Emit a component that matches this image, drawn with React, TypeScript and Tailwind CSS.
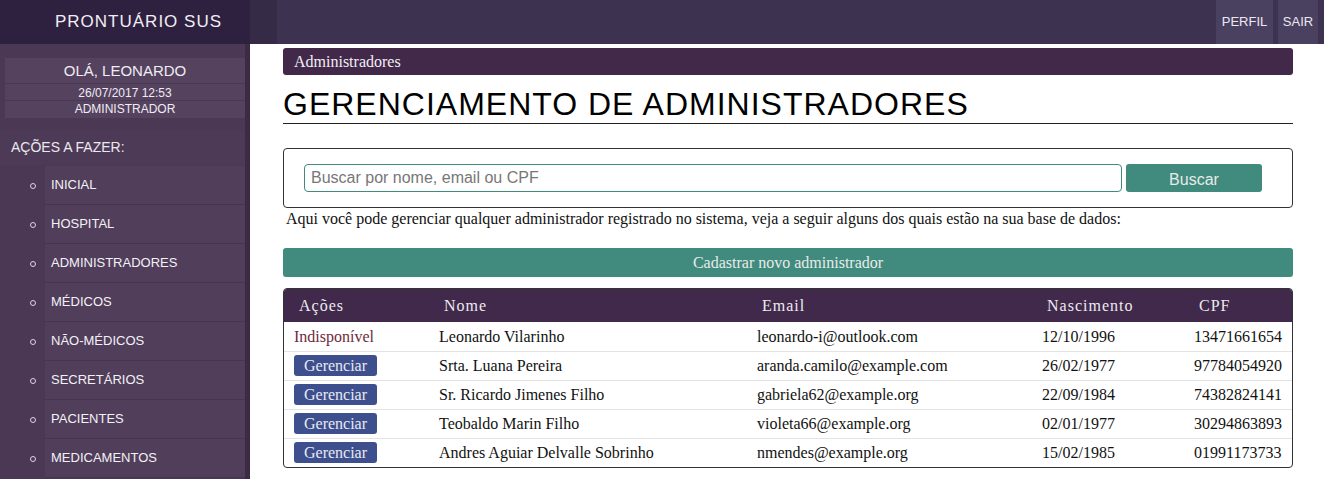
import { Fragment } from 'react'

const menu = [
  'INICIAL',
  'HOSPITAL',
  'ADMINISTRADORES',
  'MÉDICOS',
  'NÃO-MÉDICOS',
  'SECRETÁRIOS',
  'PACIENTES',
  'MEDICAMENTOS',
]

const admins = [
  { nome: 'Leonardo Vilarinho', email: 'leonardo-i@outlook.com', nasc: '12/10/1996', cpf: '13471661654', self: true },
  { nome: 'Srta. Luana Pereira', email: 'aranda.camilo@example.com', nasc: '26/02/1977', cpf: '97784054920' },
  { nome: 'Sr. Ricardo Jimenes Filho', email: 'gabriela62@example.org', nasc: '22/09/1984', cpf: '74382824141' },
  { nome: 'Teobaldo Marin Filho', email: 'violeta66@example.org', nasc: '02/01/1977', cpf: '30294863893' },
  { nome: 'Andres Aguiar Delvalle Sobrinho', email: 'nmendes@example.org', nasc: '15/02/1985', cpf: '01991173733' },
]

const sans = "font-['Liberation_Sans',Arial,sans-serif]"
const serif = "font-['Liberation_Serif','Times_New_Roman',serif]"
const cols = 'grid grid-cols-[145px_318px_285px_152px_1fr]'

function Sidebar() {
  return (
    <aside className={`w-[250px] shrink-0 h-[479px] flex flex-col ${sans}`}>
      <div className="h-[44px] bg-[#2e2140] flex items-center pl-[55px] text-[17px] tracking-[1px] text-[#f2eef5]">
        PRONTUÁRIO SUS
      </div>
      <div className="flex-1 bg-[#4a3854] border-r-[5px] border-[#3d2b46] overflow-hidden">
        <div className="ml-[5px] mt-[14px] bg-[#54425f] text-[#f0ecf2] text-center">
          <div className="h-[26px] leading-[26px] text-[15px] border-b border-[#4a3854]">
            OLÁ, LEONARDO
          </div>
          <div className="h-[17px] leading-[18px] text-[12px] border-b border-[#4a3854]">
            26/07/2017 12:53
          </div>
          <div className="h-[17px] leading-[17px] text-[12px]">ADMINISTRADOR</div>
        </div>
        <div className="mt-[12px] h-[35px] flex items-center pl-[11px] text-[14px] text-[#ece8ef] bg-[#4c3a56]">
          AÇÕES A FAZER:
        </div>
        <ul className="mt-[1px]">
          {menu.map((m) => (
            <li key={m} className="flex h-[39px]">
              <div className="w-[45px] flex items-center justify-end pr-[9px]">
                <span className="block w-[6px] h-[6px] rounded-full border border-[#ddd6e2]" />
              </div>
              <div className="flex-1 bg-[#503e5a] border-b border-[#47354f] flex items-center pl-[6px] text-[13px] text-[#f4f1f6]">
                {m}
              </div>
            </li>
          ))}
        </ul>
      </div>
    </aside>
  )
}

function TopBar() {
  return (
    <div className={`h-[44px] bg-[#3d3350] flex ${sans}`}>
      <div className="w-[27px] bg-[#352b46]" />
      <div className="flex-1" />
      <div className="flex gap-[5px] pr-[6px] text-[13px] text-[#ece8f2]">
        <div className="w-[57px] h-[44px] bg-[#4a4060] flex items-center justify-center">PERFIL</div>
        <div className="w-[40px] h-[44px] bg-[#4a4060] flex items-center justify-center">SAIR</div>
      </div>
    </div>
  )
}

export default function App() {
  return (
    <div className="flex w-[1324px] h-[479px] overflow-hidden bg-white">
      <Sidebar />
      <main className="flex-1 flex flex-col">
        <TopBar />
        <div className="ml-[33px] w-[1010px]">
          <div className={`mt-[4px] h-[27px] bg-[#42294a] rounded-[3px] px-[11px] flex items-center text-[16px] text-[#f2eef4] ${serif}`}>
            Administradores
          </div>
          <h1 className={`mt-[11px] pb-[1px] border-b border-[#222] text-[32px] leading-[36px] tracking-[1px] text-black ${sans}`}>
            GERENCIAMENTO DE ADMINISTRADORES
          </h1>
          <div className="mt-[24px] h-[60px] border border-[#333] rounded-[4px] flex items-center pl-[20px] pr-[30px] gap-[4px]">
            <input
              className={`flex-1 h-[28px] border border-[#418a7e] rounded-[4px] px-[6px] text-[16px] text-[#333] placeholder-[#777] outline-none ${sans}`}
              placeholder="Buscar por nome, email ou CPF"
            />
            <button className={`w-[136px] h-[28px] pt-[3px] bg-[#418a7e] rounded-[3px] text-[16px] text-[#e6ecea] ${sans}`}>
              Buscar
            </button>
          </div>
          <p className={`mt-[1px] pl-[3px] text-[16px] leading-[20px] text-[#111] ${serif}`}>
            Aqui você pode gerenciar qualquer administrador registrado no sistema, veja a seguir alguns dos quais estão na sua base de dados:
          </p>
          <div className={`mt-[19px] h-[29px] bg-[#418a7e] rounded-[3px] flex items-center justify-center text-[16px] text-[#e8ecea] ${serif}`}>
            Cadastrar novo administrador
          </div>
          <div className={`mt-[11px] border border-[#333] rounded-[4px] overflow-hidden ${serif}`}>
            <div className={`${cols} h-[33px] bg-[#40294a] text-[16px] tracking-[1px] text-[#eeeaf0] items-center`}>
              {['Ações', 'Nome', 'Email', 'Nascimento', 'CPF'].map((h) => (
                <div key={h} className="pl-[15px]">{h}</div>
              ))}
            </div>
            {admins.map((a, i) => (
              <div
                key={a.cpf}
                className={`${cols} h-[29px] items-center text-[16px] text-[#111] ${i > 0 ? 'border-t border-[#e3e3e3]' : ''}`}
              >
                <div className="pl-[10px]">
                  {a.self ? (
                    <span className="text-[#6e2a3c]">Indisponível</span>
                  ) : (
                    <span className="inline-block w-[83px] h-[21px] leading-[21px] text-center rounded-[3px] bg-[#3d4f8c] text-[#e8eaf2]">
                      Gerenciar
                    </span>
                  )}
                </div>
                <Fragment>
                  <div className="pl-[10px]">{a.nome}</div>
                  <div className="pl-[10px]">{a.email}</div>
                  <div className="pl-[10px]">{a.nasc}</div>
                  <div className="pl-[10px]">{a.cpf}</div>
                </Fragment>
              </div>
            ))}
          </div>
        </div>
      </main>
    </div>
  )
}
